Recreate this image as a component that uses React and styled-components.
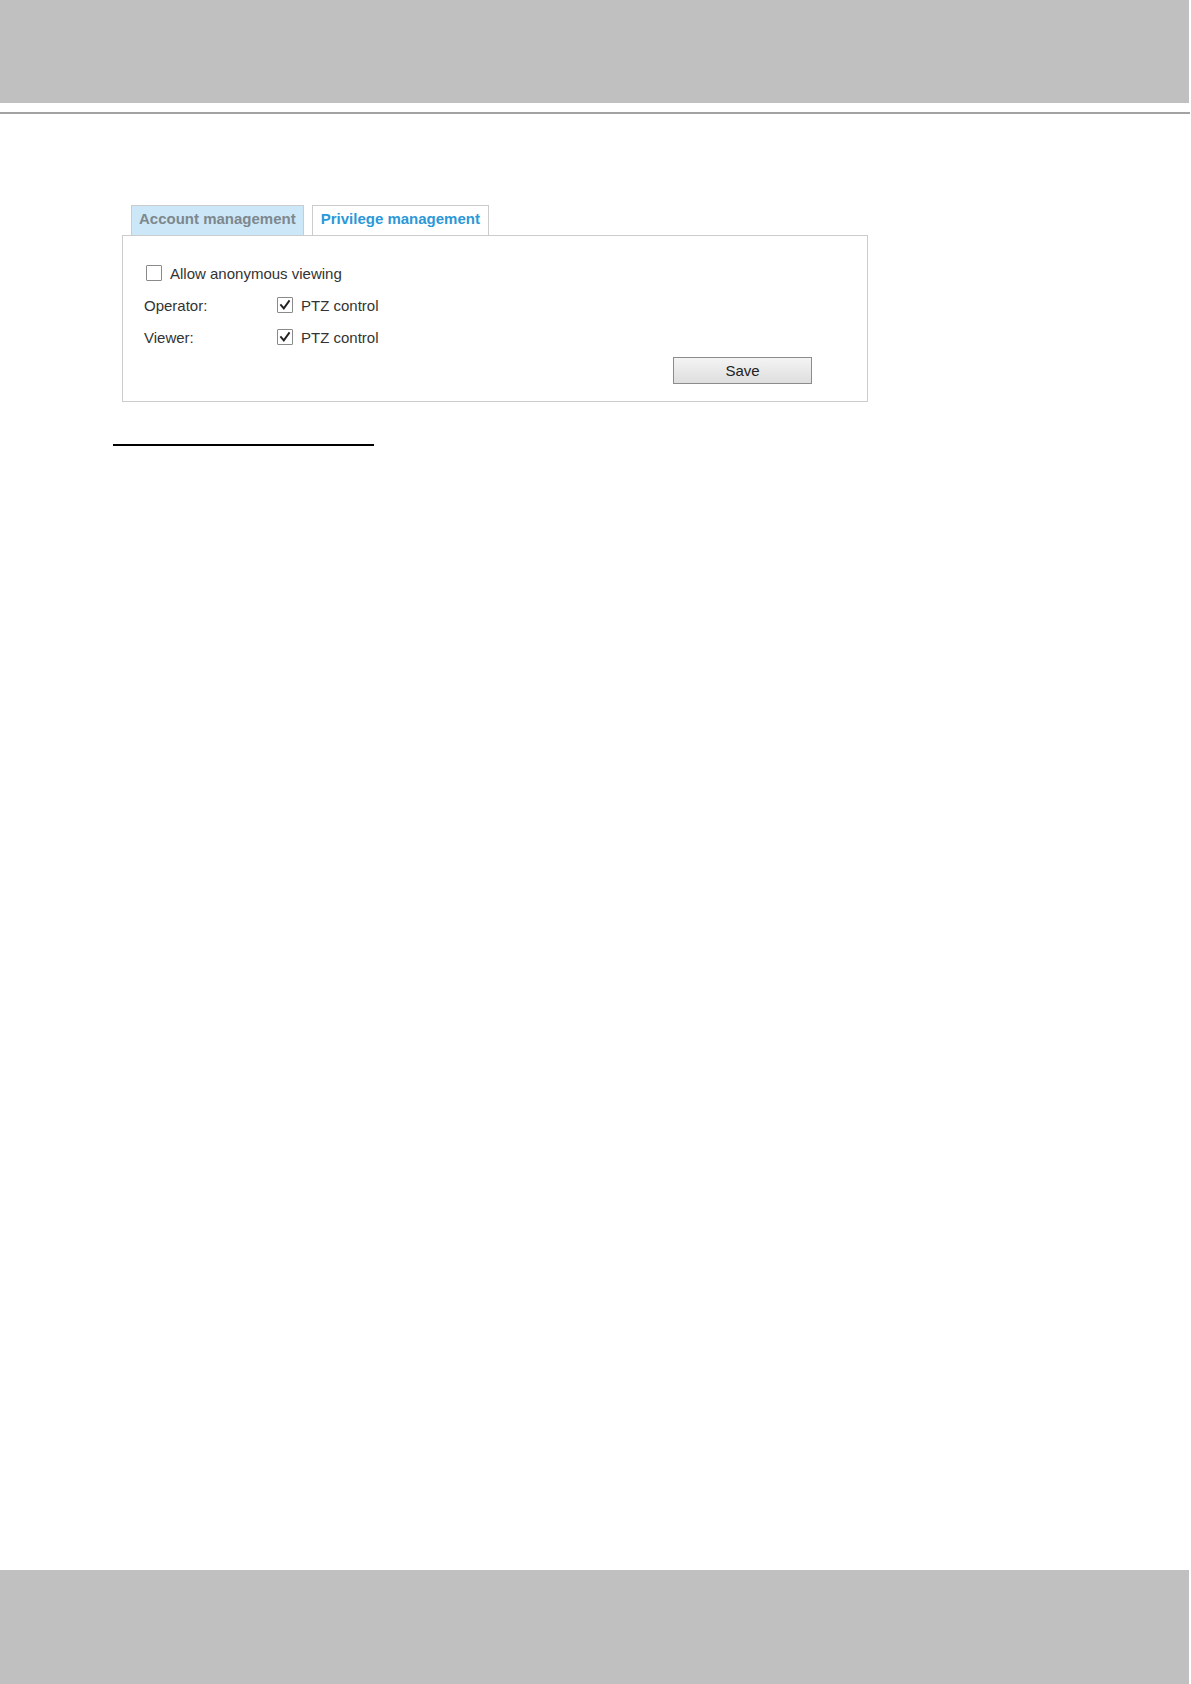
import React from "react";
import styled, { createGlobalStyle } from "styled-components";

const Global = createGlobalStyle`
  html, body { margin: 0; padding: 0; background: #ffffff; }
  body { font-family: "Liberation Sans", Arial, sans-serif; }
`;

const Page = styled.div`
  width: 1191px;
  height: 1684px;
  display: flex;
  flex-direction: column;
  background: #ffffff;
`;

const Header = styled.div`
  width: 1189px;
  height: 103px;
  background: #c0c0c0;
  flex-shrink: 0;
`;

const Rule = styled.div`
  width: 1190px;
  height: 2px;
  margin-top: 9px;
  background: #a3a3a3;
  flex-shrink: 0;
`;

const Main = styled.main`
  margin-top: 91px;
  padding-left: 113px;
  display: flex;
  flex-direction: column;
`;

const TabRow = styled.div`
  display: flex;
  gap: 8px;
  padding-left: 18px;
`;

const Tab = styled.div`
  box-sizing: border-box;
  height: 30px;
  padding: 0 ${(p) => (p.$active ? 8 : 7)}px;
  border: 1px solid #cccccc;
  border-bottom: none;
  background: ${(p) => (p.$active ? "#ffffff" : "#cce8f8")};
  color: ${(p) => (p.$active ? "#2b98d8" : "#7d878d")};
  font-size: 15px;
  font-weight: 700;
  line-height: 26px;
  white-space: nowrap;
`;

const Panel = styled.section`
  box-sizing: border-box;
  width: 746px;
  height: 167px;
  margin-left: 9px;
  border: 1px solid #cccccc;
  padding: 21px 21px 0 21px;
  display: flex;
  flex-direction: column;
`;

const Row = styled.div`
  height: 32px;
  display: flex;
  align-items: center;
  padding-left: ${(p) => p.$indent || 0}px;
  color: #333333;
  font-size: 15px;
`;

const Label = styled.span`
  width: 133px;
  flex-shrink: 0;
`;

const CheckLabel = styled.label`
  display: flex;
  align-items: center;
  gap: 8px;
  white-space: nowrap;
`;

const Box = styled.span`
  box-sizing: border-box;
  width: 16px;
  height: 16px;
  border: 1px solid #8a8a8a;
  border-radius: 1px;
  background: #ffffff;
  display: flex;
  align-items: center;
  justify-content: center;
  flex-shrink: 0;
`;

const ButtonRow = styled.div`
  display: flex;
  justify-content: flex-end;
  padding-right: 34px;
  margin-top: 4px;
`;

const Button = styled.button`
  box-sizing: border-box;
  width: 139px;
  height: 27px;
  border: 1px solid #8c8c8c;
  border-radius: 0;
  background: linear-gradient(#f4f4f4, #dedede);
  color: #222222;
  font-family: "Liberation Sans", Arial, sans-serif;
  font-size: 15px;
  padding: 0;
  cursor: pointer;
`;

const Divider = styled.div`
  width: 261px;
  height: 2px;
  margin-top: 42px;
  background: #000000;
`;

const Footer = styled.div`
  margin-top: auto;
  width: 1189px;
  height: 114px;
  background: #c0c0c0;
  flex-shrink: 0;
`;

function Checkbox({ checked, children }) {
  return (
    <CheckLabel>
      <Box>
        {checked && (
          <svg width="14" height="14" viewBox="0 0 14 14">
            <path
              d="M3 7.2 L5.8 10.4 L11 3.2"
              fill="none"
              stroke="#222"
              strokeWidth="1.9"
              strokeLinecap="square"
              strokeLinejoin="miter"
            />
          </svg>
        )}
      </Box>
      <span>{children}</span>
    </CheckLabel>
  );
}

export default function App() {
  return (
    <>
      <Global />
      <Page>
        <Header />
        <Rule />
        <Main>
          <TabRow>
            <Tab>Account management</Tab>
            <Tab $active>Privilege management</Tab>
          </TabRow>
          <Panel>
            <Row $indent={2}>
              <Checkbox>Allow anonymous viewing</Checkbox>
            </Row>
            <Row>
              <Label>Operator:</Label>
              <Checkbox checked>PTZ control</Checkbox>
            </Row>
            <Row>
              <Label>Viewer:</Label>
              <Checkbox checked>PTZ control</Checkbox>
            </Row>
            <ButtonRow>
              <Button>Save</Button>
            </ButtonRow>
          </Panel>
          <Divider />
        </Main>
        <Footer />
      </Page>
    </>
  );
}
